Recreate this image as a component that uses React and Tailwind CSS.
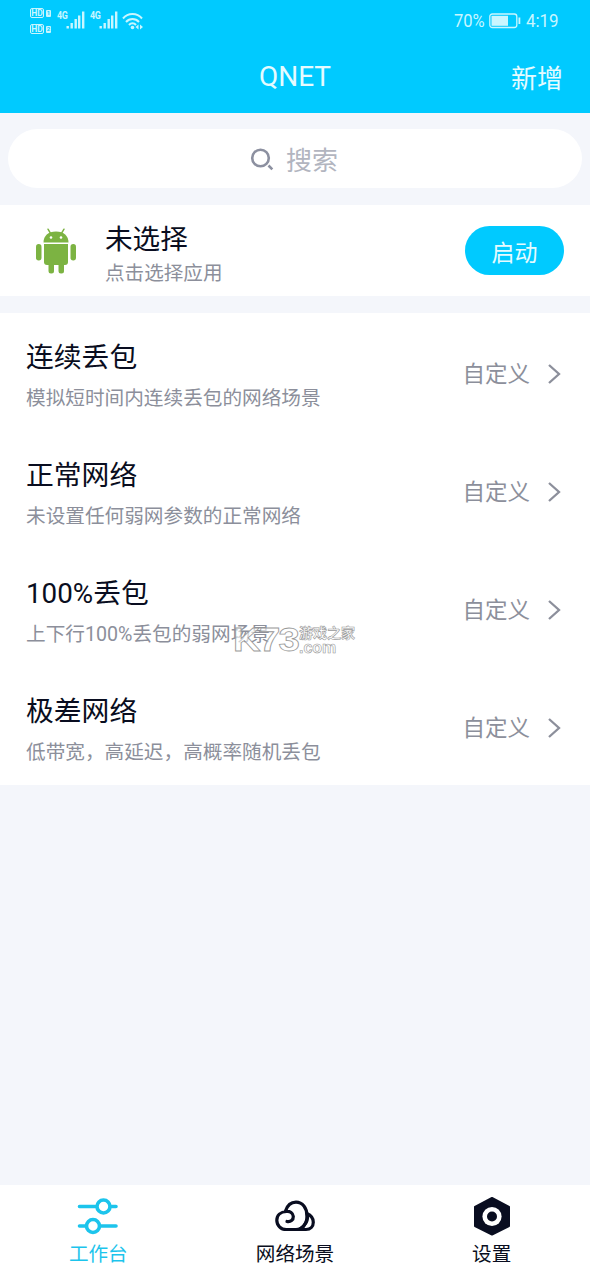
import { useState } from "react";

const scenes = [
  { title: "连续丢包", desc: "模拟短时间内连续丢包的网络场景" },
  { title: "正常网络", desc: "未设置任何弱网参数的正常网络" },
  { title: "100%丢包", desc: "上下行100%丢包的弱网场景", mark: true },
  { title: "极差网络", desc: "低带宽，高延迟，高概率随机丢包" },
];

function HdBadge({ sim }) {
  return (
    <div className="flex items-center gap-[2px]">
      <span className="flex h-[10px] w-[14px] items-center justify-center rounded-[2px] border border-[#c9f6ff] text-[8.5px] leading-none font-bold">
        HD
      </span>
      <span className="flex h-[7px] w-[5px] items-center justify-center rounded-[1px] bg-[#c9f6ff] text-[6px] leading-none font-bold text-[#00caff]">
        {sim}
      </span>
    </div>
  );
}

function Signal() {
  return (
    <div className="flex items-start">
      <span className="w-[9px] origin-left scale-x-[0.85] text-[10.5px] leading-[10px] font-bold tracking-[-0.3px]">4G</span>
      <svg width="19" height="18" viewBox="0 0 19 18" fill="currentColor">
        <rect x="0.5" y="15" width="2.4" height="2.5" />
        <rect x="4.5" y="12" width="2.4" height="5.5" />
        <rect x="8.5" y="8" width="2.4" height="9.5" />
        <rect x="12" y="4.5" width="2.4" height="13" />
        <rect x="16" y="0.5" width="2.4" height="17" />
      </svg>
    </div>
  );
}

function StatusBar() {
  return (
    <div className="flex h-[42px] items-center justify-between pr-[31px] pl-[30px] text-[#c9f6ff]">
      <div className="flex h-[26px] items-start">
        <div className="flex flex-col gap-[6px]">
          <HdBadge sim="1" />
          <HdBadge sim="2" />
        </div>
        <div className="mt-[3px] ml-[6px] flex gap-[5px]">
          <Signal />
          <Signal />
        </div>
        <svg className="mt-[4px] ml-[4px]" width="22" height="18" viewBox="0 0 22 18" fill="none" stroke="currentColor" strokeWidth="2">
          <path d="M1 6.5C6 .5 15 .5 20 6.5" />
          <path d="M4 10c3.6-4 9.400-4 13 0" />
          <path d="M7 13c2-2.300 5-2.300 7 0" />
          <circle cx="10.500" cy="15.500" r="1.800" fill="currentColor" stroke="none" />
          <path d="M16.500 12.500v5L13.500 15zM18 12.500v5l3-2.500z" fill="currentColor" stroke="none" />
        </svg>
      </div>
      <div className="flex items-center text-[18px] leading-[22px]">
        <span className="w-[35px] origin-left scale-x-[0.92]">70%</span>
        <svg width="33" height="16" viewBox="0 0 33 16" fill="none">
          <rect x="0.8" y="1" width="27" height="13.500" rx="2.500" stroke="currentColor" strokeWidth="1.300" />
          <rect x="2.500" y="2.800" width="16.500" height="10" fill="currentColor" />
          <rect x="29.500" y="4.500" width="1.800" height="6.500" fill="currentColor" />
        </svg>
        <span className="ml-[4px] w-[33px] origin-left scale-x-[0.94]">4:19</span>
      </div>
    </div>
  );
}

function AndroidIcon() {
  return (
    <svg width="42" height="46" viewBox="0 0 42 46" fill="#7cb342">
      <path d="M8.500 14.500C8.500 8 13 3.500 21 3.500S33.500 8 33.500 14.500z" />
      <path d="m13 1.200 3 5M29 1.200l-3 5" stroke="#7cb342" strokeWidth="1.500" strokeLinecap="round" />
      <circle cx="16" cy="9.500" r="1.300" fill="#fff" />
      <circle cx="26" cy="9.500" r="1.300" fill="#fff" />
      <path d="M9 16h24v18a3 3 0 0 1-3 3H12a3 3 0 0 1-3-3z" />
      <rect x="1" y="16" width="5.500" height="16.500" rx="2.700" />
      <rect x="35.500" y="16" width="5.500" height="16.500" rx="2.700" />
      <rect x="13.500" y="32" width="5.500" height="13.500" rx="2.500" />
      <rect x="23.500" y="32" width="5.500" height="13.500" rx="2.500" />
    </svg>
  );
}

function SlidersIcon() {
  return (
    <svg width="42" height="40" viewBox="0 0 42 40" fill="none" stroke="currentColor" strokeWidth="3.600" strokeLinecap="round">
      <path d="M2.500 10.500H19M33.500 10.500H39M2.500 30H8M23 30H39" />
      <circle cx="26.500" cy="10.500" r="6.500" />
      <circle cx="16" cy="30" r="6.500" />
    </svg>
  );
}

function CloudIcon() {
  return (
    <svg width="42" height="40" viewBox="0 0 42 40" fill="none" stroke="currentColor" strokeWidth="3.200" strokeLinecap="round" strokeLinejoin="round">
      <path d="M13 25.500c3.500.8 6.500-1.500 6.300-5-.3-3.300-3.300-5.300-6.800-5C6.500 15.800 2.800 19.500 2.800 24.300c0 5 4 9.200 9.500 9.200H22c6 0 11-5.500 11-13.500C33 12 28.500 6.200 22 6.200c-5 0-8.800 3.500-10.500 8.900" />
      <path d="M22 33.500h10c4.500 0 7.300-3.300 7.300-7.300 0-4-2.500-7-6.500-8.700M33 17.500c2 6-2 13-7 15.500" />
    </svg>
  );
}

function SettingsIcon() {
  return (
    <svg width="42" height="40" viewBox="0 0 42 40" fill="currentColor">
      <path d="M21 2 38 11v19L21 38.500 4 30V11z" stroke="currentColor" strokeWidth="2" strokeLinejoin="round" />
      <circle cx="21" cy="20.500" r="9.600" fill="#fff" />
      <circle cx="21" cy="20.500" r="5" />
    </svg>
  );
}

const tabs = [
  { label: "工作台", Icon: SlidersIcon },
  { label: "网络场景", Icon: CloudIcon },
  { label: "设置", Icon: SettingsIcon },
];

function Watermark() {
  return (
    <div className="absolute top-[75px] left-[233px] flex items-start text-white/60">
      <span className="w-[66px] origin-left scale-x-[1.16] font-['Liberation_Sans'] text-[33px] leading-[31px] font-bold tracking-[-1.5px] [-webkit-text-stroke:0.8px_#999]">
        K73
      </span>
      <div className="font-bold text-white [-webkit-text-stroke:0.6px_#999]">
        <p className="text-[14px] leading-[18px]">游戏之家</p>
        <p className="font-['Liberation_Sans'] text-[16px] leading-[12px]">.com</p>
      </div>
    </div>
  );
}

function SceneRow({ scene }) {
  return (
    <div className="relative flex h-[118px] items-center justify-between pr-[29px] pl-[26px]">
      <div className="pt-[7px]">
        <h2 className="text-[27.8px] leading-[40px] text-[#090d20]">{scene.title}</h2>
        <p className="mt-[7px] text-[19.65px] leading-[28px] text-[#8c8f9b]">{scene.desc}</p>
      </div>
      <button className="flex items-center gap-[17px] pt-[3px] text-[22.500px] leading-[32px] text-[#8c8f9b]">
        <span className="pt-px">自定义</span>
        <svg width="14" height="22" viewBox="0 0 14 22" fill="none" stroke="currentColor" strokeWidth="2.300">
          <path d="m2 2 10 9L2 20" />
        </svg>
      </button>
      {scene.mark && <Watermark />}
    </div>
  );
}

export default function App() {
  const [active, setActive] = useState(0);

  return (
    <div className="flex h-[1278px] w-[590px] flex-col overflow-hidden bg-[#f4f6fb] font-[Roboto,'Noto_Sans_CJK_SC',sans-serif]">
      {/* Header */}
      <header className="h-[113px] shrink-0 bg-[#00caff]">
        <StatusBar />
        <div className="grid h-[70px] grid-cols-3 items-center pr-[27px] pl-[27px] text-[#e5fbff]">
          <h1 className="col-start-2 text-center text-[28px] leading-[34px]">QNET</h1>
          <button className="pt-[4px] text-right text-[26px] leading-[36px]">新增</button>
        </div>
      </header>

      {/* Search */}
      <div className="px-2 pt-4 pb-[17px]">
        <div className="flex h-[59px] items-center justify-center gap-[12px] rounded-full bg-white pr-[2px] text-[26px] leading-[36px] text-[#b2b5bf]">
          <svg width="24" height="24" viewBox="0 0 24 24" fill="none" stroke="#8c90a0" strokeWidth="2.600">
            <circle cx="10.500" cy="11" r="8.300" />
            <path d="m18.500 18.500 3.800 3.800" />
          </svg>
          <span className="pt-[5px]">搜索</span>
        </div>
      </div>

      {/* Selected app */}
      <div className="flex h-[91px] shrink-0 items-center bg-white pr-[26px] pl-[35px]">
        <AndroidIcon />
        <div className="ml-[28px] flex-1 pt-[7px]">
          <p className="text-[27.6px] leading-[38px] text-[#090d20]">未选择</p>
          <p className="mt-px text-[19.600px] leading-[28px] text-[#8c8f9b]">点击选择应用</p>
        </div>
        <button className="h-[49px] w-[99px] rounded-full bg-[#00caff] pt-[6px] text-[23px] leading-[34px] text-[#e5fbff]">启动</button>
      </div>

      {/* Scenes */}
      <div className="mt-[17px] bg-white">
        {scenes.map((scene) => (
          <SceneRow key={scene.title} scene={scene} />
        ))}
      </div>

      {/* Tab bar */}
      <nav className="mt-auto grid h-[93px] shrink-0 grid-cols-3 bg-white">
        {tabs.map(({ label, Icon }, i) => (
          <button
            key={label}
            onClick={() => setActive(i)}
            className={`flex flex-col items-center pt-[11px] ${i === active ? "text-[#1cc4ec]" : "text-[#090d20]"}`}
          >
            <Icon />
            <span className="mt-[5px] text-[19.6px] leading-[28px]">{label}</span>
          </button>
        ))}
      </nav>
    </div>
  );
}
